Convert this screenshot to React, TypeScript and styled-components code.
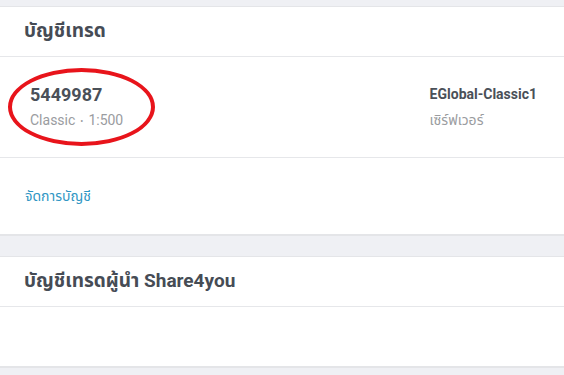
import React from "react";
import styled, { createGlobalStyle } from "styled-components";

const Global = createGlobalStyle`
  html, body { margin: 0; padding: 0; }
  body {
    background: #eff0f4;
    font-family: Roboto, "Noto Sans", "Noto Sans Thai", sans-serif;
    -webkit-font-smoothing: antialiased;
  }
`;

const Page = styled.div`
  padding-top: 6px;
  display: flex;
  flex-direction: column;
  gap: 20px;
`;

const Card = styled.section`
  background: #fff;
  border-top: 1px solid #e4e5e8;
  border-bottom: 2px solid #e4e5e8;
  display: flex;
  flex-direction: column;
`;

const CardHeader = styled.h2`
  margin: 0;
  height: 49px;
  padding: 0 24px;
  display: flex;
  align-items: center;
  font-size: 19px;
  font-weight: 700;
  color: #464c55;
  border-bottom: 1px solid #e6e7ea;
`;

const AccountRow = styled.div`
  position: relative;
  height: 100px;
  padding: 0 27px 0 30px;
  display: flex;
  align-items: center;
  justify-content: space-between;
  border-bottom: 1px solid #e6e7ea;
`;

const InfoBlock = styled.div`
  display: flex;
  flex-direction: column;
  gap: 7px;
  padding-top: 1px;
`;

const Primary = styled.div<{ $size: number }>`
  font-size: ${(p) => p.$size}px;
  font-weight: 700;
  color: #4a5058;
  line-height: 19px;
`;

const Secondary = styled.div`
  font-size: 14px;
  color: #9a9ca0;
  line-height: 19px;
`;

const Dot = styled.span`
  margin: 0 5px;
  font-size: 9px;
  vertical-align: 1px;
`;

const Circle = styled.div`
  position: absolute;
  left: 8px;
  top: 11px;
  width: 139px;
  height: 70px;
  border: 4px solid #e8141b;
  border-radius: 50%;
  pointer-events: none;
`;

const LinkRow = styled.div`
  height: 76px;
  padding: 0 25px;
  display: flex;
  align-items: center;
`;

const Link = styled.a`
  font-size: 14px;
  color: #3096c4;
  text-decoration: none;
  cursor: pointer;
`;

const Body = styled.div`
  height: 59px;
`;

export default function App() {
  return (
    <>
      <Global />
      <Page>
        <Card>
          <CardHeader>บัญชีเทรด</CardHeader>
          <AccountRow>
            <Circle />
            <InfoBlock>
              <Primary $size={18}>5449987</Primary>
              <Secondary>
                Classic<Dot>•</Dot>1:500
              </Secondary>
            </InfoBlock>
            <InfoBlock>
              <Primary $size={14}>EGlobal-Classic1</Primary>
              <Secondary>เซิร์ฟเวอร์</Secondary>
            </InfoBlock>
          </AccountRow>
          <LinkRow>
            <Link>จัดการบัญชี</Link>
          </LinkRow>
        </Card>
        <Card>
          <CardHeader>บัญชีเทรดผู้นำ Share4you</CardHeader>
          <Body />
        </Card>
      </Page>
    </>
  );
}
